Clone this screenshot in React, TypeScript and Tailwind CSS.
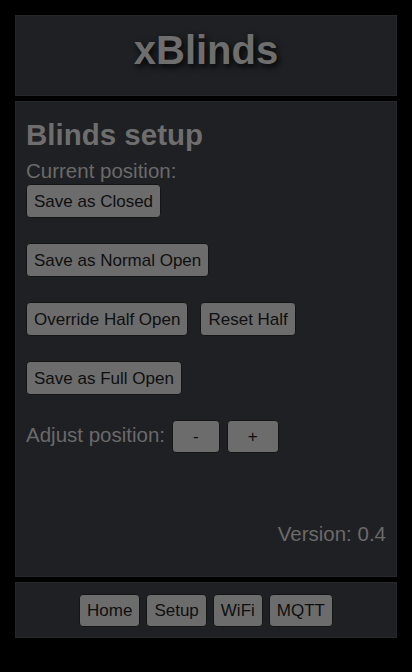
import React from "react";

const base =
  "bg-[#6c6c6c] border border-[#151515] rounded-[4px] text-[17px] leading-none text-[#0f0f0f] flex items-center justify-center";
const btn = base + " h-[34px] px-[7px]";
const small = base + " h-[33px] px-[20px]";
const nav = base + " h-[33px] px-[7px]";

export default function App() {
  return (
    <div
      className="w-[412px] h-[672px] bg-black pt-[15px] px-[15px] flex flex-col gap-[5px]"
      style={{ fontFamily: '"Liberation Sans", Arial, sans-serif' }}
    >
      <div className="h-[81px] bg-[#1f2023] border border-[#27282b] pt-[11px] text-center">
        <h1
          className="text-[40px] leading-[46px] font-bold text-[#6e6e6e]"
          style={{ textShadow: "2px 3px 6px rgba(0,0,0,0.95)" }}
        >
          xBlinds
        </h1>
      </div>

      <div className="h-[476px] bg-[#1f2023] border border-[#27282b] px-[10px] pt-[16px] pb-[31px] flex flex-col">
        <h2 className="text-[29.5px] leading-[34px] font-bold text-[#6e6e6e]">Blinds setup</h2>
        <div className="mt-[8px] text-[20.5px] leading-[22px] text-[#6a6a6a]">Current position:</div>
        <div className="mt-[2px] flex flex-col gap-[25px] items-start">
          <button className={btn}>Save as Closed</button>
          <button className={btn}>Save as Normal Open</button>
          <div className="flex gap-[12px]">
            <button className={btn}>Override Half Open</button>
            <button className={btn}>Reset Half</button>
          </div>
          <button className={btn}>Save as Full Open</button>
          <div className="flex items-center">
            <span className="text-[20.5px] leading-[22px] text-[#6a6a6a] mt-[-3px] mr-[7px]">Adjust position:</span>
            <button className={small}>-</button>
            <button className={small + " ml-[7px]"}>+</button>
          </div>
        </div>
        <div className="mt-auto text-right text-[20.5px] leading-[22px] text-[#6a6a6a]">Version: 0.4</div>
      </div>

      <div className="h-[56px] bg-[#1f2023] border border-[#27282b] flex items-center justify-center gap-[6px]">
        <button className={nav}>Home</button>
        <button className={nav}>Setup</button>
        <button className={nav}>WiFi</button>
        <button className={nav}>MQTT</button>
      </div>
    </div>
  );
}
